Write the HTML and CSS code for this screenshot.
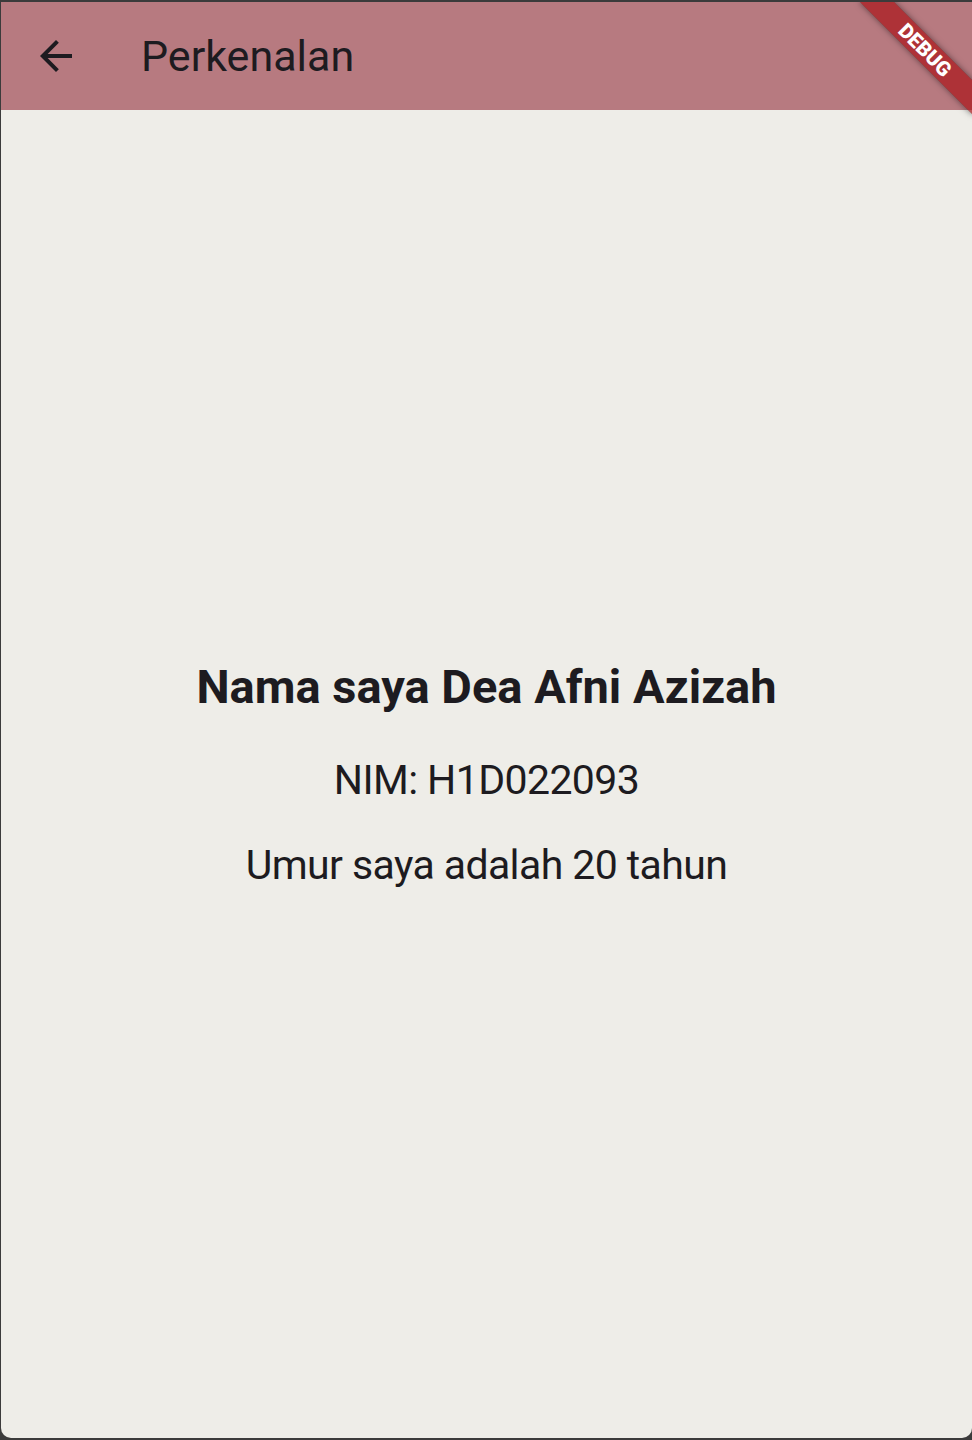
FILE: index.html
```html
<!DOCTYPE html>
<html lang="id">
<head>
<meta charset="utf-8">
<title>Perkenalan</title>
<link rel="stylesheet" href="styles.css">
</head>
<body>
<div class="window">
  <header class="appbar">
    <button class="back" aria-label="Kembali">
      <svg viewBox="0 0 24 24" width="48" height="48"><path d="M20 11H7.83l5.59-5.59L12 4l-8 8 8 8 1.41-1.41L7.83 13H20v-2z" fill="currentColor"/></svg>
    </button>
    <h1 class="title">Perkenalan</h1>
  </header>
  <main class="content">
    <h2 class="name">Nama saya Dea Afni Azizah</h2>
    <p class="line">NIM: H1D022093</p>
    <p class="line">Umur saya adalah 20 tahun</p>
  </main>
  <div class="banner">DEBUG</div>
</div>
</body>
</html>
```
FILE: styles.css
```css
html, body {
  margin: 0;
  padding: 0;
  background: #3b3b3b;
  height: 1440px;
  overflow: hidden;
}
.window {
  position: relative;
  margin: 2px 0 0 1px;
  height: 1436px;
  background: #eeede8;
  border-radius: 0 0 10px 10px;
  overflow: hidden;
  display: flex;
  flex-direction: column;
  font-family: Roboto, "Noto Sans", sans-serif;
  color: #1d1b20;
}
.appbar {
  height: 108px;
  flex: none;
  background: #b77a80;
  display: flex;
  align-items: center;
}
.back {
  width: 48px;
  height: 48px;
  margin-left: 31px;
  padding: 0;
  border: 0;
  background: none;
  color: #1d1b20;
  display: flex;
}
.title {
  margin: 0 0 0 61px;
  font-size: 43px;
  font-weight: 400;
  line-height: 1;
}
.content {
  flex: 1;
  display: flex;
  flex-direction: column;
  align-items: center;
  justify-content: center;
  gap: 32px;
  padding-top: 6px;
}
.name {
  margin: 0 0 9px;
  font-size: 47px;
  font-weight: 700;
  line-height: 1.1;
}
.line {
  margin: 0;
  font-size: 41px;
  letter-spacing: -0.6px;
  line-height: 1.3;
}
.banner {
  position: absolute;
  top: 36px;
  right: -33px;
  width: 160px;
  height: 24px;
  transform: rotate(45deg);
  background: rgba(170, 20, 24, 0.7);
  box-shadow: 0 0 6px rgba(0, 0, 0, 0.5);
  color: #fff;
  font-size: 20.4px;
  font-weight: 900;
  line-height: 24px;
  text-align: center;
}
```
